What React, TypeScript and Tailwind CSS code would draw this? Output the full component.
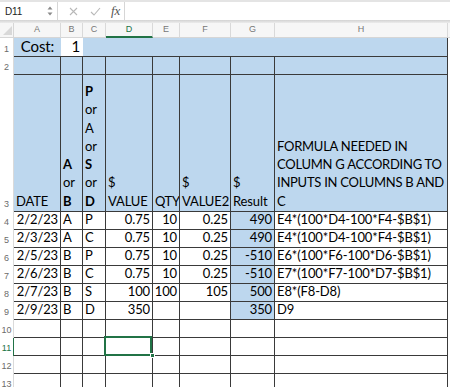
import React from "react";

const BLUE = "bg-[#bdd7ee]";
const LINE = "border-[#3a3a3a]";

type Row = string[];

const data: Row[] = [
  ["2/2/23", "A", "P", "0.75", "10", "0.25", "490", "E4*(100*D4-100*F4-$B$1)"],
  ["2/3/23", "A", "C", "0.75", "10", "0.25", "490", "E4*(100*D4-100*F4-$B$1)"],
  ["2/5/23", "B", "P", "0.75", "10", "0.25", "-510", "E6*(100*F6-100*D6-$B$1)"],
  ["2/6/23", "B", "C", "0.75", "10", "0.25", "-510", "E7*(100*F7-100*D7-$B$1)"],
  ["2/7/23", "B", "S", "100", "100", "105", "500", "E8*(F8-D8)"],
  ["2/9/23", "B", "D", "350", "", "", "350", "D9"],
  ["", "", "", "", "", "", "", ""],
  ["", "", "", "", "", "", "", ""],
  ["", "", "", "", "", "", "", ""],
  ["", "", "", "", "", "", "", ""],
];

// right-aligned columns: A, D, E, F, G
const rightCols = [true, false, false, true, true, true, true, false];

function RowHead({ n, active }: { n: number; active?: boolean }) {
  return (
    <div
      className={`flex items-end justify-center pb-[3px] text-[9px] leading-[10px] tracking-normal font-['Liberation_Sans',sans-serif] border-r ${
        active ? "border-[#217346] text-[#217346]" : "border-[#dadada] text-[#6b6b6b]"
      }`}
    >
      {n}
    </div>
  );
}

function Cell({
  children,
  right,
  className = "",
}: {
  children?: React.ReactNode;
  right?: boolean;
  className?: string;
}) {
  return (
    <div
      className={`flex items-end overflow-hidden whitespace-nowrap border-r border-b ${LINE} px-[2px] pb-[1px] leading-[17px] ${
        right ? "justify-end" : "justify-start"
      } ${className}`}
    >
      {children}
    </div>
  );
}

function FormulaBar() {
  return (
    <div>
      <div className="flex h-[20px] items-center border-t-2 border-[#e4e4e4] bg-white">
        <div className="flex h-full w-[58px] items-center justify-between border-r border-[#d6d6d6] pl-[5px] pr-[4px]">
          <span className="text-[10px] text-[#222] font-['Liberation_Sans',sans-serif]">D11</span>
          <svg width="6" height="12" viewBox="0 0 6 12">
            <path d="M0.5 4.5 L3 1.5 L5.5 4.5 Z" fill="#8a8a8a" />
            <path d="M0.5 7.5 L3 10.5 L5.5 7.5 Z" fill="#8a8a8a" />
          </svg>
        </div>
        <div className="flex h-full w-[67px] items-center border-r border-[#d6d6d6]">
          <svg className="ml-[11px]" width="9" height="9" viewBox="0 0 9 9">
            <path d="M1 1 L8 8 M8 1 L1 8" stroke="#b8b8b8" strokeWidth="1.1" />
          </svg>
          <svg className="ml-[12px]" width="11" height="9" viewBox="0 0 11 9">
            <path d="M1 5 L4 8 L10 1" stroke="#b8b8b8" strokeWidth="1.1" fill="none" />
          </svg>
          <span className="ml-[10px] text-[13px] italic text-[#555] font-['Liberation_Serif',serif]">
            fx
          </span>
        </div>
        <div className="flex-1" />
      </div>
      <div className="h-[3px] bg-gradient-to-b from-[#d2d2d2] to-[#ececec]" />
    </div>
  );
}

export default function App() {
  const cols = ["A", "B", "C", "D", "E", "F", "G", "H"];
  return (
    <div className="h-[387px] w-[450px] overflow-hidden bg-white text-[13px] tracking-[-0.01em] text-black font-['Lato',sans-serif]">
      <FormulaBar />
      <div className="grid grid-cols-[14px_47px_22px_23px_47px_27px_51px_44px_173px_2px] grid-rows-[15px_19px_18px_137px_repeat(10,18px)]">
        {/* column headers */}
        <div className="relative border-r border-b border-[#d6d6d6] bg-[#f6f6f6]">
          <svg className="absolute bottom-[2px] right-[1px]" width="9" height="9" viewBox="0 0 9 9">
            <path d="M9 0 L9 9 L0 9 Z" fill="#d8d8d8" />
          </svg>
        </div>
        {cols.map((c) => (
          <div
            key={c}
            className={`flex items-center justify-center bg-[#f6f6f6] text-[9px] tracking-normal font-['Liberation_Sans',sans-serif] border-r border-[#d9d9d9] ${
              c === "D"
                ? "border-b-2 border-b-[#217346] text-[#217346]"
                : "border-b border-b-[#d6d6d6] text-[#777]"
            }`}
          >
            {c}
          </div>
        ))}
        <div className="border-b border-[#d6d6d6] bg-[#f6f6f6]" />

        {/* row 1 */}
        <RowHead n={1} />
        <div className={`flex items-end justify-center border-b ${LINE} ${BLUE} pb-[1px] text-[15px] leading-[17px]`}>
          Cost:
        </div>
        <div className={`flex items-end justify-end border-b ${LINE} bg-white px-[3px] pb-[1px] text-[15px] leading-[17px]`}>
          1
        </div>
        <div className={`col-span-6 border-r border-b ${LINE} ${BLUE}`} />
        <div className="bg-white" />

        {/* row 2 */}
        <RowHead n={2} />
        {cols.map((c) => (
          <Cell key={c} className={BLUE} />
        ))}
        <div className="bg-white" />

        {/* row 3 */}
        <RowHead n={3} />
        <Cell className={`${BLUE} leading-[18.3px]`}>DATE</Cell>
        <Cell className={`${BLUE} leading-[18.3px]`}>
          <div className="flex flex-col">
            <b>A</b>
            <span>or</span>
            <b>B</b>
          </div>
        </Cell>
        <Cell className={`${BLUE} leading-[18.3px]`}>
          <div className="flex flex-col">
            <b>P</b>
            <span>or</span>
            <span>A</span>
            <span>or</span>
            <b>S</b>
            <span>or</span>
            <b>D</b>
          </div>
        </Cell>
        <Cell className={`${BLUE} leading-[18.3px]`}>
          <div className="flex flex-col">
            <span>$</span>
            <span>VALUE</span>
          </div>
        </Cell>
        <Cell className={`${BLUE} px-[1px] leading-[18.3px] tracking-[-0.03em]`}>QTY</Cell>
        <Cell className={`${BLUE} leading-[18.3px]`}>
          <div className="flex flex-col">
            <span>$</span>
            <span>VALUE2</span>
          </div>
        </Cell>
        <Cell className={`${BLUE} leading-[18.3px]`}>
          <div className="flex flex-col">
            <span>$</span>
            <span>Result</span>
          </div>
        </Cell>
        <Cell className={`${BLUE} leading-[18.3px]`}>
          <div className="flex flex-col tracking-[-0.02em]">
            <span>FORMULA NEEDED IN</span>
            <span>COLUMN G ACCORDING TO</span>
            <span>INPUTS IN COLUMNS B AND</span>
            <span>C</span>
          </div>
        </Cell>
        <div className="bg-white" />

        {/* data rows 4-13 */}
        {data.map((row, i) => {
          const n = i + 4;
          return (
            <React.Fragment key={n}>
              <RowHead n={n} active={n === 11} />
              {row.map((v, j) => {
                const isG = j === 6 && i < 6;
                const selected = n === 11 && j === 3;
                return (
                  <Cell
                    key={j}
                    right={rightCols[j]}
                    className={`${isG ? BLUE : "bg-white"} ${j === 4 ? "px-[1px]" : ""} ${
                      selected ? "relative overflow-visible" : ""
                    }`}
                  >
                    {v}
                    {selected && (
                      <>
                        <div className="absolute -left-[2px] -top-[2px] h-[20px] w-[48px] border-2 border-[#217346]" />
                        <div className="absolute -bottom-[3px] -right-[3px] h-[5px] w-[5px] border border-white bg-[#217346]" />
                      </>
                    )}
                  </Cell>
                );
              })}
              <div className="bg-white" />
            </React.Fragment>
          );
        })}
      </div>
    </div>
  );
}
